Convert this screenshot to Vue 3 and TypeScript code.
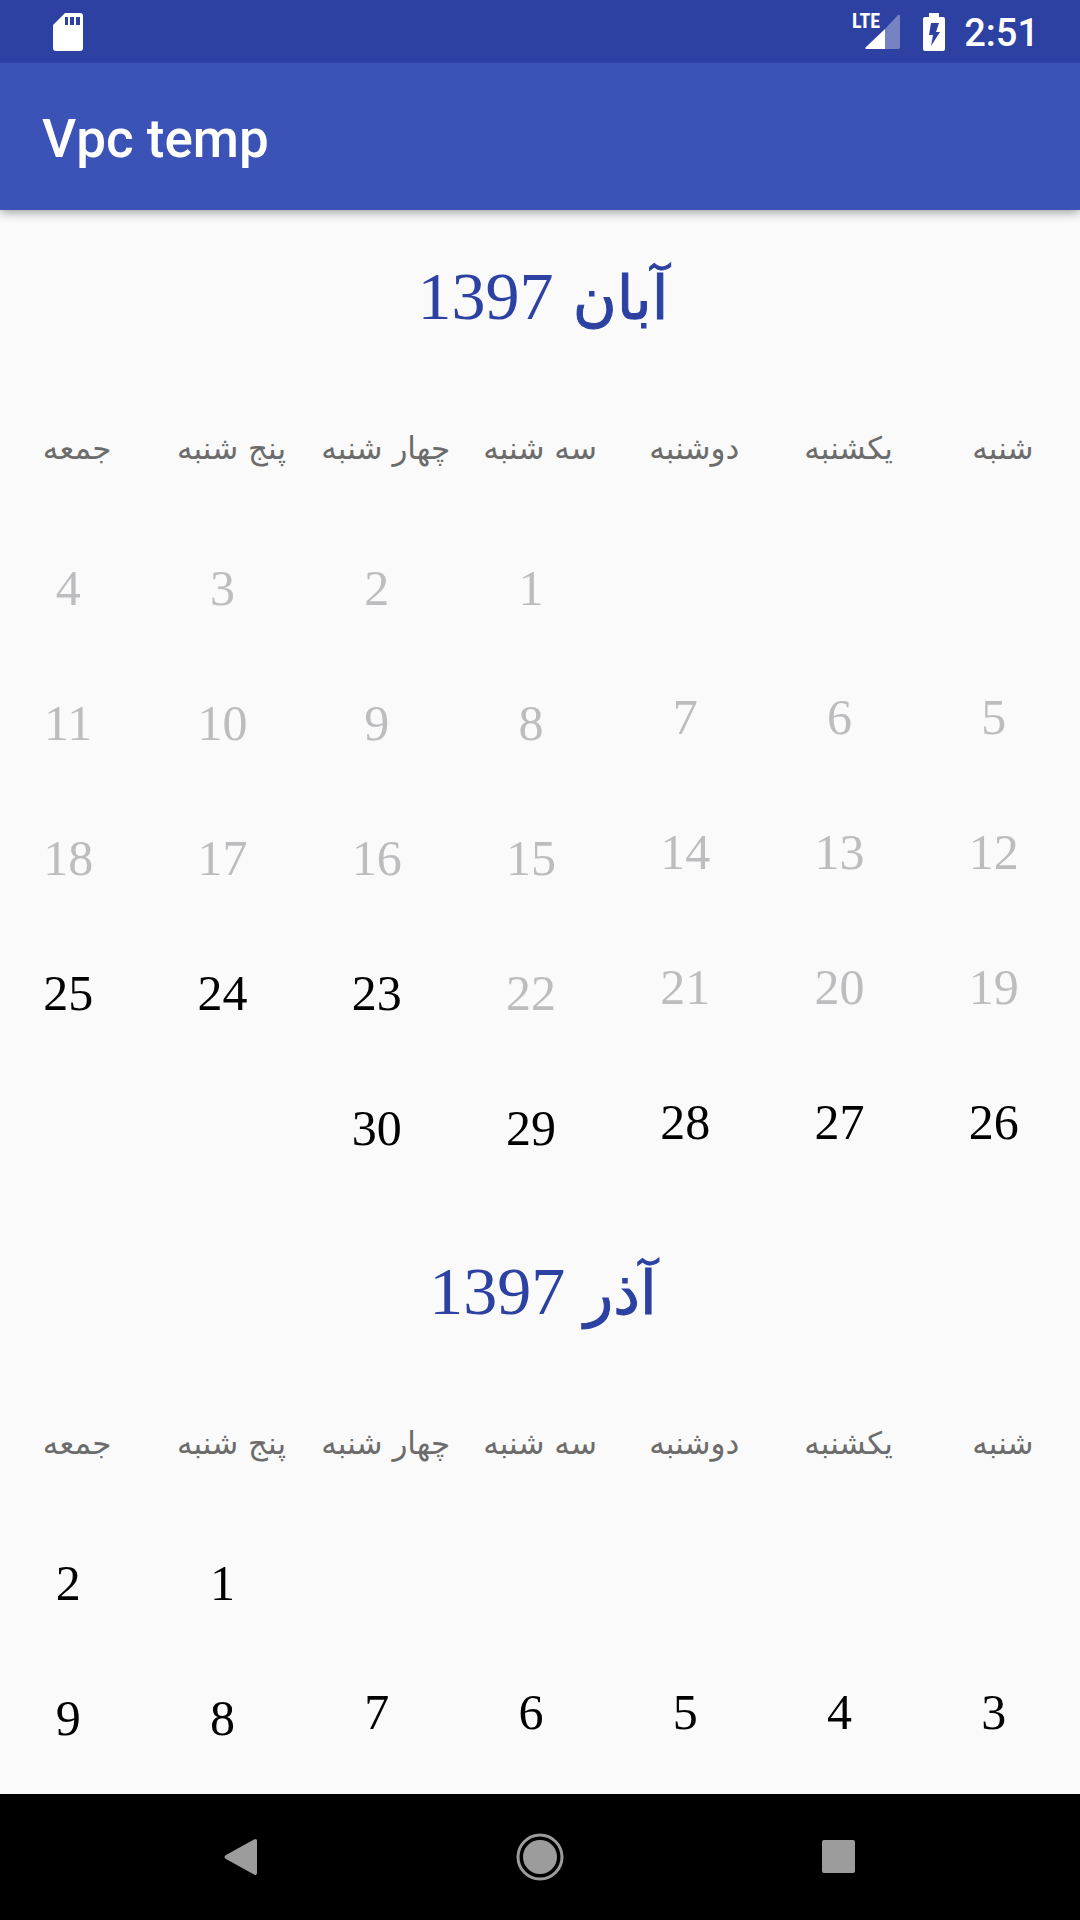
<script setup lang="ts">
interface Month {
  name: string
  year: number
  lead: number
  weeks: number[][]
}

const weekdays = ['شنبه', 'یکشنبه', 'دوشنبه', 'سه شنبه', 'چهار شنبه', 'پنج شنبه', 'جمعه']

// Builds week rows; 0 marks a blank cell.
function buildMonth(name: string, year: number, lead: number, days: number): Month {
  const weeks: number[][] = []
  for (let start = 1 - lead; start <= days; start += 7) {
    weeks.push(Array.from({ length: 7 }, (_, i) => {
      const day = start + i
      return day >= 1 && day <= days ? day : 0
    }))
  }
  return { name, year, lead, weeks }
}

const months: Month[] = [
  buildMonth('آبان', 1397, 3, 30),
  buildMonth('آذر', 1397, 5, 9),
]

const today = 23
const isPast = (monthIndex: number, day: number): boolean => monthIndex === 0 && day < today
</script>

<template>
  <div class="screen">
    <header>
      <div class="status">
        <svg class="sd" viewBox="0 0 30 38" width="30" height="38" aria-hidden="true">
          <path fill="#fff" fill-rule="evenodd" d="M12 0H27a3 3 0 0 1 3 3V35a3 3 0 0 1-3 3H3a3 3 0 0 1-3-3V12ZM12 4V12H15V4ZM17 4V12H21V4ZM23 4V12H27V4Z" />
        </svg>
        <div class="indicators">
          <span class="network">
            <span class="lte">LTE</span>
            <svg viewBox="0 0 35 35" width="35" height="35" aria-hidden="true">
              <path fill="#fff" fill-opacity="0.35" d="M20 15 33 1Q35 0 35 2V33a2 2 0 0 1-2 2H20Z" />
              <path fill="#fff" d="M20 15V35H2Q-1 35 1 33Z" />
            </svg>
          </span>
          <svg class="battery" viewBox="0 0 22 38" width="22" height="38" aria-hidden="true">
            <path fill="#fff" fill-rule="evenodd" d="M6 0H16V4H20a2 2 0 0 1 2 2V36a2 2 0 0 1-2 2H2a2 2 0 0 1-2-2V6a2 2 0 0 1 2-2H6ZM8 10 6 22H10L8 33 17 19H13L16 10Z" />
          </svg>
          <time class="clock">2:51</time>
        </div>
      </div>
      <div class="appbar"><h1>Vpc temp</h1></div>
    </header>

    <main dir="rtl" lang="fa">
      <section v-for="(month, m) in months" :key="month.name" class="month">
        <h2>{{ month.name }} <span class="year">{{ month.year }}</span></h2>
        <table>
          <thead>
            <tr><th v-for="name in weekdays" :key="name" scope="col">{{ name }}</th></tr>
          </thead>
          <tbody>
            <tr v-for="(week, w) in month.weeks" :key="w">
              <td v-for="(day, d) in week" :key="d">
                <button
                  v-if="day"
                  type="button"
                  class="day"
                  :class="{ raised: d < month.lead }"
                  :disabled="isPast(m, day)"
                >{{ day }}</button>
              </td>
            </tr>
          </tbody>
        </table>
      </section>
    </main>

    <nav>
      <button type="button" aria-label="Back">
        <svg viewBox="0 0 48 48" width="48" height="48"><path fill="#9c9c9c" d="M9 22 37 6.500Q40 5 40 8V40Q40 43 37 41.500L9 26Q6 24 9 22Z" /></svg>
      </button>
      <button type="button" aria-label="Home">
        <svg viewBox="0 0 48 48" width="48" height="48"><circle cx="24" cy="24" r="22" fill="none" stroke="#9c9c9c" stroke-width="3" /><circle cx="24" cy="24" r="17" fill="#9c9c9c" /></svg>
      </button>
      <button type="button" aria-label="Overview">
        <svg viewBox="0 0 48 48" width="48" height="48"><rect x="7" y="7" width="33" height="33" rx="2" fill="#9c9c9c" /></svg>
      </button>
    </nav>
  </div>
</template>

<style>
body {
  margin: 0;
  background: #fafafa;
}
</style>

<style scoped>
.screen {
  display: flex;
  flex-direction: column;
  min-height: 100vh;
  background: #fafafa;
}
header {
  color: #fff;
  font-family: Roboto, "Liberation Sans", sans-serif;
  font-weight: 500;
  box-shadow: 0 2px 10px rgba(0, 0, 0, 0.4);
}
.status {
  display: flex;
  align-items: center;
  justify-content: space-between;
  height: 63px;
  padding: 0 41px 0 53px;
  background: #2c41a2;
}
.indicators {
  display: flex;
  align-items: center;
}
.network {
  display: flex;
  position: relative;
}
.lte {
  position: absolute;
  right: 20px;
  top: -3px;
  font-family: "Roboto Condensed", "Liberation Sans Narrow", Roboto, sans-serif;
  font-size: 20px;
  line-height: 20px;
  font-weight: 700;
}
.battery {
  margin: 0 19px 0 23px;
}
.clock {
  padding-top: 2px;
  font-size: 38px;
  line-height: 44px;
}
.appbar {
  display: flex;
  align-items: center;
  box-sizing: border-box;
  height: 147px;
  padding: 4px 42px 0;
  background: #3b52b6;
}
h1 {
  margin: 0;
  font-size: 53px;
  line-height: 64px;
  font-weight: 500;
}
main {
  display: flex;
  flex: 1;
  flex-direction: column;
  gap: 10px;
  font-family: "DejaVu Sans", sans-serif;
}
h2 {
  margin: 0;
  padding: 6px 0 0 6px;
  color: #2c41a2;
  font-size: 60px;
  line-height: 164px;
  font-weight: 400;
  text-align: center;
  -webkit-text-stroke: 1px #2c41a2;
}
.year {
  font-family: "Liberation Serif", serif;
  font-size: 68px;
  line-height: 1;
  -webkit-text-stroke: 0;
}
table {
  width: 100%;
  table-layout: fixed;
  border-collapse: collapse;
}
th {
  box-sizing: border-box;
  height: 140px;
  padding: 0 0 4px;
  color: #6c6c6c;
  font-size: 31px;
  font-weight: 400;
  white-space: nowrap;
}
td {
  height: 135px;
  padding: 0;
}
.day {
  display: block;
  width: 100%;
  padding: 0 18px 0 0;
  border: 0;
  background: none;
  color: #000;
  font-family: "Liberation Serif", serif;
  font-size: 50px;
  line-height: 60px;
}
.day:disabled {
  color: #bdbdc0;
}
.raised {
  padding-bottom: 12px;
}
nav {
  display: flex;
  height: 126px;
  padding: 0 92px;
  background: #000;
}
nav button {
  display: flex;
  flex: 1;
  align-items: center;
  justify-content: center;
  padding: 0;
  border: 0;
  background: none;
}
</style>
